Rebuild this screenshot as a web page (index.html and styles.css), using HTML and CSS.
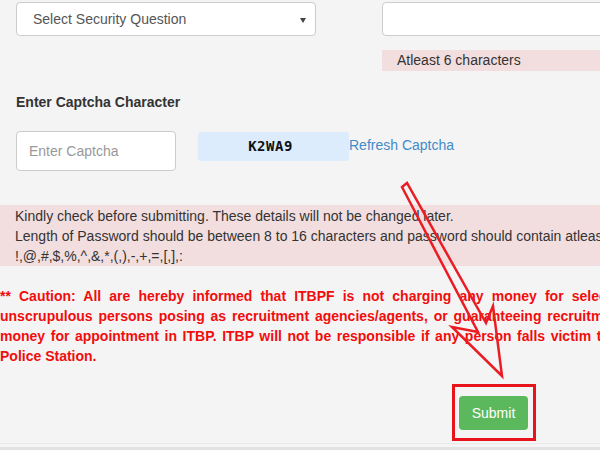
FILE: index.html
```html
<!DOCTYPE html>
<html lang="en">
<head>
  <meta charset="UTF-8" />
  <title>Registration - Captcha</title>
  <link rel="stylesheet" href="styles.css">
</head>
<body>
  <div class="page">
    <div class="top-row">
      <div class="col-left">
        <div class="select-box">Select Security Question</div>
      </div>
      <div class="col-right">
        <div class="text-box"></div>
        <div class="hint">Atleast 6 characters</div>
      </div>
    </div>

    <label class="field-label">Enter Captcha Character</label>
    <div class="captcha-row">
      <input type="text" class="captcha-input" placeholder="Enter Captcha">
      <div class="captcha-img">K2WA9</div>
      <a href="#" class="refresh">Refresh Captcha</a>
    </div>

    <div class="note">
      <div>Kindly check before submitting. These details will not be changed later.</div>
      <div>Length of Password should be between 8 to 16 characters and password should contain atleast one of the following special characters</div>
      <div>!,@,#,$,%,^,&amp;,*,(,),-,+,=,[,],:</div>
    </div>

    <div class="caution">
      <div class="line l1">** Caution: All are hereby informed that ITBPF is not charging any money for selection</div>
      <div class="line l2">unscrupulous persons posing as recruitment agencies/agents, or guaranteeing recruitment</div>
      <div class="line l3">money for appointment in ITBP. ITBP will not be responsible if any person falls victim to</div>
      <div class="line">Police Station.</div>
    </div>

    <div class="submit-row">
      <div class="submit-mark">
        <button class="btn-submit">Submit</button>
      </div>
    </div>

    <div class="footer"><div class="footer-bar"></div></div>
  </div>

  <!-- hand drawn arrow pointing at submit -->
  <svg class="arrow" width="600" height="450" viewBox="0 0 600 450">
    <polygon points="402,187 478,332 452,327 502,376 493,306 486,323 407,183"
      fill="none" stroke="#ea1c24" stroke-width="2.5" stroke-linejoin="miter"/>
  </svg>
</body>
</html>
```

FILE: styles.css
```css
body {
  margin: 0;
  background: #f4f4f4;
  font-family: "Liberation Sans", Arial, sans-serif;
  font-size: 14px;
  color: #333;
  overflow: hidden;
}

.page {
  width: 600px;
  height: 450px;
  overflow: hidden;
}

.top-row {
  display: flex;
  align-items: flex-start;
  padding-top: 2px;
}

.col-left {
  flex: none;
  width: 300px;
  margin-left: 16px;
}

.col-right {
  flex: none;
  width: 260px;
  margin-left: 66px;
}

.select-box {
  position: relative;
  box-sizing: border-box;
  height: 34px;
  line-height: 32px;
  padding-left: 16px;
  background: #fff;
  border: 1px solid #ccc;
  border-radius: 4px;
  color: #555;
}

.select-box::after {
  content: "";
  position: absolute;
  right: 9px;
  top: 15px;
  border-left: 3px solid transparent;
  border-right: 3px solid transparent;
  border-top: 5px solid #444;
}

.text-box {
  box-sizing: border-box;
  height: 34px;
  background: #fff;
  border: 1px solid #ccc;
  border-radius: 4px;
}

.hint {
  margin-top: 14px;
  height: 21px;
  line-height: 21px;
  padding-left: 15px;
  background: #f2dede;
  color: #333;
}

.field-label {
  display: block;
  margin: 21px 0 0 16px;
  line-height: 20px;
  font-weight: bold;
}

.captcha-row {
  display: flex;
  align-items: flex-start;
  margin: 19px 0 0 16px;
}

.captcha-input {
  box-sizing: border-box;
  width: 160px;
  height: 40px;
  padding: 0 12px;
  background: #fff;
  border: 1px solid #ccc;
  border-radius: 4px;
  font-family: "Liberation Sans", Arial, sans-serif;
  font-size: 14px;
  color: #555;
}

.captcha-input::placeholder {
  color: #999;
}

.captcha-img {
  width: 151px;
  height: 29px;
  line-height: 29px;
  margin: 1px 0 0 22px;
  background: #dcecfc;
  border-radius: 3px;
  text-align: center;
  font-family: "DejaVu Sans Mono", monospace;
  font-weight: bold;
  font-size: 14px;
  letter-spacing: 0.5px;
  color: #111;
  text-indent: -6px;
}

.refresh {
  margin-top: 4px;
  line-height: 20px;
  color: #428bca;
  text-decoration: none;
}

.note {
  margin-top: 34px;
  height: 61px;
  box-sizing: border-box;
  padding: 1px 15px 0;
  background: #f2dede;
  line-height: 20px;
  color: #333;
  white-space: nowrap;
}

.caution {
  margin-top: 20px;
  color: #f20d0d;
  font-weight: bold;
  line-height: 20px;
  white-space: nowrap;
}

.l1 { word-spacing: 4.2px; }
.l2 { word-spacing: 2px; }
.l3 { word-spacing: 1.7px; }

.submit-row {
  display: flex;
  margin-top: 18px;
  padding-left: 452px;
}

.submit-mark {
  padding: 9px 5px 8px 4px;
  border: 3px solid #e8141c;
}

.btn-submit {
  width: 69px;
  height: 34px;
  border: none;
  border-radius: 4px;
  background: #5cb85c;
  color: #fff;
  font-family: "Liberation Sans", Arial, sans-serif;
  font-size: 14px;
  cursor: pointer;
}

.footer {
  margin-top: 2px;
  border-top: 1px solid #eaeaea;
}

.footer-bar {
  margin-top: 3px;
  height: 10px;
  background: #e2e2e2;
}

.arrow {
  position: absolute;
  left: 0;
  top: 0;
  pointer-events: none;
}
```
